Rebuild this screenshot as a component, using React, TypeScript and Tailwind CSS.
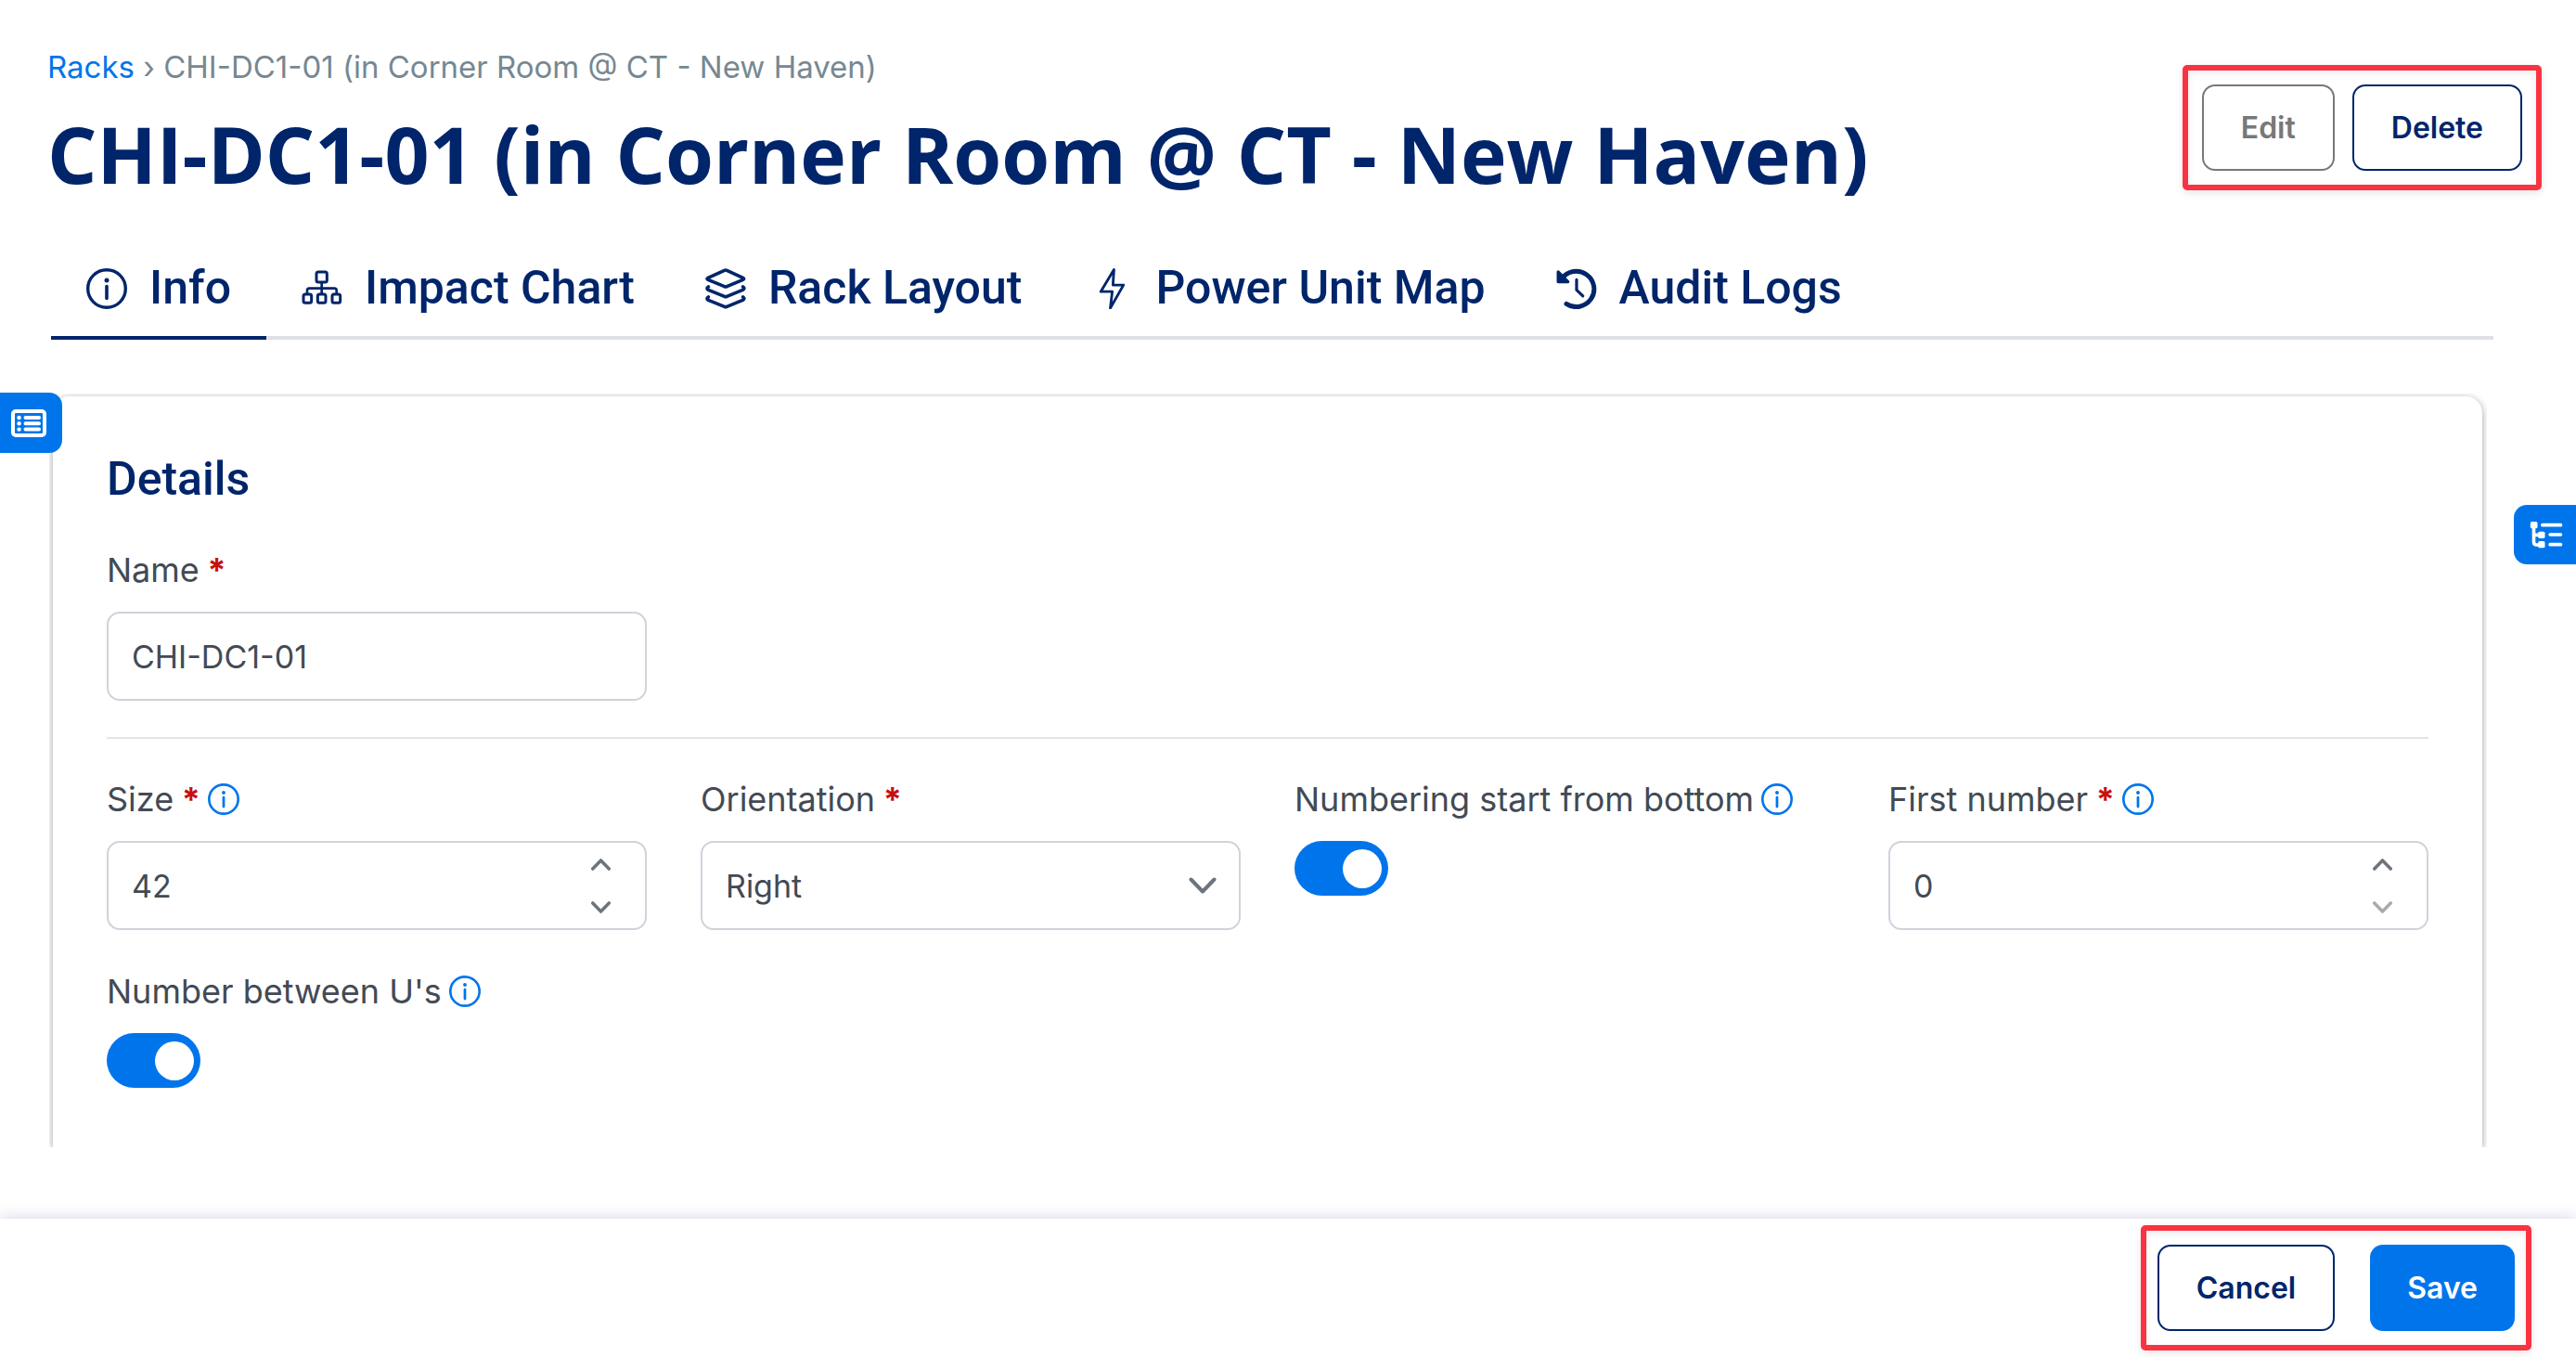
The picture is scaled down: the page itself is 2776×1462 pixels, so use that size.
import React, { useState, type ReactNode } from "react";

function InfoIcon({ className }: { className: string }) {
  return (
    <svg viewBox="0 0 44 44" className={className} fill="none" aria-hidden="true">
      <circle cx="22" cy="22" r="20.3" stroke="currentColor" strokeWidth="3.4" />
      <path d="M22 19.5V32.5" stroke="currentColor" strokeWidth="3.6" strokeLinecap="round" />
      <circle cx="22" cy="13" r="2.5" fill="currentColor" />
    </svg>
  );
}

function DiagramIcon() {
  return (
    <svg viewBox="20 52 132 132" className="size-[44px]" fill="none" stroke="currentColor" aria-hidden="true">
      <g strokeWidth="9">
        <rect x="68" y="64" width="34" height="33" rx="6" />
        <rect x="26" y="136" width="26" height="28" rx="6" />
        <rect x="72" y="136" width="26" height="28" rx="6" />
        <rect x="119" y="136" width="26" height="28" rx="6" />
      </g>
      <path d="M85 98V134M38 134V124Q38 117 45 117H126Q133 117 133 124V134" strokeWidth="8" />
    </svg>
  );
}

function LayersIcon() {
  return (
    <svg viewBox="1322 59 132 132" className="size-[44px]" fill="none" stroke="currentColor" strokeWidth="11" strokeLinecap="round" strokeLinejoin="round" aria-hidden="true">
      <path d="M1384 66Q1388 64 1392 66L1444 90Q1450 93 1444 96L1392 118Q1388 120 1384 118L1331 96Q1325 93 1331 90Z" />
      <path d="M1332 119Q1324 124 1332 129L1384 150Q1388 152 1392 150L1443 129Q1452 124 1444 119" />
      <path d="M1332 152Q1324 157 1332 162L1384 183Q1388 185 1392 183L1443 162Q1452 157 1444 152" />
    </svg>
  );
}

function BoltIcon() {
  return (
    <svg viewBox="16 56 124 124" className="size-[44px]" fill="none" stroke="currentColor" strokeWidth="8" strokeLinecap="round" strokeLinejoin="round" aria-hidden="true">
      <path d="M82 60L42 127H77L71 177L111 107H79Z" />
    </svg>
  );
}

function HistoryIcon() {
  return (
    <svg viewBox="1411 62 124 124" className="size-[44px]" fill="none" stroke="currentColor" strokeLinecap="round" strokeLinejoin="round" aria-hidden="true">
      <path d="M1428 94A54 54 0 1 1 1442 170" strokeWidth="14" />
      <path d="M1417 73V103H1447Z" fill="currentColor" strokeWidth="9" />
      <path d="M1473 97V128L1492 146" strokeWidth="9" />
    </svg>
  );
}

function ListCardIcon() {
  return (
    <svg viewBox="0 0 38 30" className="h-[30px] w-[38px]" fill="none" stroke="currentColor" strokeLinecap="round" aria-hidden="true">
      <rect x="2" y="2" width="34" height="26" rx="3" strokeWidth="4" />
      <path d="M8.5 9H8.6M8.5 15.3H8.6M8.5 21.6H8.6" strokeWidth="4.4" />
      <path d="M15.5 9H30M15.5 15.3H30M15.5 21.6H30" strokeWidth="4" />
    </svg>
  );
}

function TreeIcon() {
  return (
    <svg viewBox="500 483 110 90" className="h-[30px] w-[37px]" aria-hidden="true">
      <g fill="currentColor">
        <rect x="502" y="486" width="23" height="22" rx="5" />
        <rect x="527" y="518" width="22" height="22" rx="5" />
        <rect x="527" y="549" width="22" height="22" rx="5" />
      </g>
      <g fill="none" stroke="currentColor" strokeWidth="11" strokeLinecap="round">
        <path d="M513 500V552Q513 561 522 561H530M513 529H530" />
        <path d="M541 497H600M566 528H600M566 560H600" />
      </g>
    </svg>
  );
}

function Chevron({ up, stroke, className }: { up?: boolean; stroke: number; className: string }) {
  return (
    <svg viewBox="0 0 30 18" className={className} fill="none" stroke="currentColor" strokeLinecap="round" strokeLinejoin="round" aria-hidden="true">
      <path d={up ? "M2.5 15.5L15 2.5L27.5 15.5" : "M2.5 2.5L15 15.5L27.5 2.5"} strokeWidth={stroke} />
    </svg>
  );
}

const tabs: { label: string; icon: ReactNode; active?: boolean }[] = [
  { label: "Info", icon: <InfoIcon className="size-[44px]" />, active: true },
  { label: "Impact Chart", icon: <DiagramIcon /> },
  { label: "Rack Layout", icon: <LayersIcon /> },
  { label: "Power Unit Map", icon: <BoltIcon /> },
  { label: "Audit Logs", icon: <HistoryIcon /> },
];

function Field({ id, label, required, info, children }: { id: string; label: string; required?: boolean; info?: boolean; children: ReactNode }) {
  return (
    <div>
      <div className="flex h-12 items-center gap-2 text-[36px] leading-[48px] whitespace-nowrap">
        <label htmlFor={id}>
          {label}
          {required && <span className="font-bold text-[#c90f0f]"> *</span>}
        </label>
        {info && (
          <button type="button" aria-label={`About ${label}`} className="text-[#0075eb]">
            <InfoIcon className="size-[34px]" />
          </button>
        )}
      </div>
      <div className="mt-[21px]">{children}</div>
    </div>
  );
}

function NumberField({ id, initial }: { id: string; initial: number }) {
  const [value, setValue] = useState(initial);
  return (
    <div className="flex h-24 overflow-hidden rounded-[14px] border-2 border-[#ced4dc]">
      <input
        id={id}
        inputMode="numeric"
        value={value}
        onChange={(e) => setValue(Number(e.target.value) || 0)}
        className="min-w-0 flex-1 pl-[25px] text-[34px] outline-none"
      />
      <div className="mr-4 flex w-16 flex-col text-[#6c757d]">
        <button type="button" aria-label="Increase" onClick={() => setValue(value + 1)} className="flex flex-1 items-center justify-center">
          <Chevron up stroke={5} className="h-[13px] w-[21px]" />
        </button>
        <button type="button" aria-label="Decrease" disabled={value === 0} onClick={() => setValue(value - 1)} className="flex flex-1 items-center justify-center disabled:opacity-60">
          <Chevron stroke={5} className="h-[13px] w-[21px]" />
        </button>
      </div>
    </div>
  );
}

function Toggle({ id }: { id: string }) {
  return (
    <input
      id={id}
      type="checkbox"
      role="switch"
      defaultChecked
      className="flex h-[59px] w-[101px] appearance-none items-center rounded-full bg-gray-300 px-[7px] before:size-[42px] before:rounded-full before:bg-white checked:justify-end checked:bg-[#0075eb]"
    />
  );
}

function Highlight({ className, children }: { className: string; children: ReactNode }) {
  return (
    <div className={`flex shrink-0 rounded-[5px] border-6 border-[#fa3342] py-[15px] text-[32px] font-semibold shadow-[0_3px_8px_rgba(0,0,0,0.1),inset_0_3px_8px_rgba(0,0,0,0.08)] ${className}`}>
      {children}
    </div>
  );
}

export default function App() {
  return (
    <div className="relative flex h-screen flex-col overflow-hidden bg-white font-['Inter',sans-serif] text-[#434a54]">
      <header className="flex items-start justify-between pr-[37px] pl-[51px]">
        <div className="pt-12">
          <nav aria-label="Breadcrumb" className="text-[33px] leading-[48px] text-[#768892]">
            <a href="#racks" className="text-[#0075eb]">Racks</a>
            <span> › CHI-DC1-01 (in Corner Room @ CT - New Haven)</span>
          </nav>
          <h1 className="mt-[10px] font-['Open_Sans',sans-serif] text-[84px] leading-[120px] font-bold whitespace-nowrap text-[#00256b]">
            CHI-DC1-01 (in Corner Room @ CT - New Haven)
          </h1>
        </div>
        <Highlight className="mt-[70px] gap-[19px] px-[15px]">
          <button type="button" disabled className="h-[93px] rounded-[14px] border-2 border-[#77787a] px-[40px] text-[#77787a]">Edit</button>
          <button type="button" className="h-[93px] rounded-[14px] border-2 border-[#00256b] px-[40px] text-[#00256b]">Delete</button>
        </Highlight>
      </header>

      <div role="tablist" className="mt-[33px] mr-[89px] ml-[55px] flex h-[107px] shrink-0 border-b-4 border-[#dee2e6] font-['Roboto',sans-serif] text-[50px] font-medium text-[#00256b]">
        {tabs.map((tab) => (
          <button
            key={tab.label}
            type="button"
            role="tab"
            aria-selected={!!tab.active}
            className="-mb-1 flex items-center gap-6 border-b-4 border-transparent px-[38px] whitespace-nowrap aria-selected:border-[#00256b]"
          >
            {tab.icon}
            {tab.label}
          </button>
        ))}
      </div>

      <main className="mt-[58px] mr-[96px] mb-[77px] ml-[53px] min-h-0 flex-1 overflow-hidden pt-[3px] pr-[5px] pl-[4px]">
        <section className="h-full rounded-t-[18px] px-[58px] pt-[57px] shadow-[0_2px_8px_rgba(0,0,0,0.38)]">
          <h2 className="font-['Roboto',sans-serif] text-[50px] leading-[64px] font-medium text-[#00256b]">Details</h2>
          <div className="mt-[42px] grid grid-cols-4 gap-x-[58px]">
            <Field id="name" label="Name" required>
              <input id="name" defaultValue="CHI-DC1-01" className="h-24 w-full rounded-[14px] border-2 border-[#ced4dc] px-[25px] text-[34px]" />
            </Field>
          </div>
          <hr className="mt-[39px] border-t-2 border-[#e5e5e5]" />
          <div className="mt-[41px] grid grid-cols-4 gap-x-[58px] gap-y-[42px]">
            <Field id="size" label="Size" required info>
              <NumberField id="size" initial={42} />
            </Field>
            <Field id="orientation" label="Orientation" required>
              <div className="relative">
                <select id="orientation" defaultValue="Right" className="h-24 w-full appearance-none rounded-[14px] border-2 border-[#ced4dc] px-[25px] text-[34px]">
                  <option>Right</option>
                  <option>Left</option>
                </select>
                <Chevron stroke={4} className="pointer-events-none absolute inset-y-0 right-[26px] my-auto h-[18px] w-[30px] text-[#6c757d]" />
              </div>
            </Field>
            <Field id="from-bottom" label="Numbering start from bottom" info>
              <Toggle id="from-bottom" />
            </Field>
            <Field id="first-number" label="First number" required info>
              <NumberField id="first-number" initial={0} />
            </Field>
            <Field id="between" label="Number between U's" info>
              <Toggle id="between" />
            </Field>
          </div>
        </section>
      </main>

      <footer className="flex h-[149px] shrink-0 items-start justify-end bg-white pt-[7px] pr-12 shadow-[0_0_16px_rgba(0,37,107,0.2)]">
        <Highlight className="gap-[38px] px-3">
          <button type="button" className="h-[93px] rounded-[14px] border-2 border-[#00256b] px-[40px] text-[#00256b]">Cancel</button>
          <button type="button" className="h-[93px] rounded-[14px] bg-[#0075eb] px-[40px] text-white">Save</button>
        </Highlight>
      </footer>

      <button type="button" aria-label="Open list" className="absolute top-[423px] left-0 flex h-[65px] w-[67px] items-center rounded-r-[14px] bg-[#0075eb] pl-[12px] text-white">
        <ListCardIcon />
      </button>
      <button type="button" aria-label="Open tree" className="absolute top-[544px] right-0 flex h-16 w-[67px] items-center rounded-l-[14px] bg-[#0075eb] pl-[17px] text-white">
        <TreeIcon />
      </button>
    </div>
  );
}
